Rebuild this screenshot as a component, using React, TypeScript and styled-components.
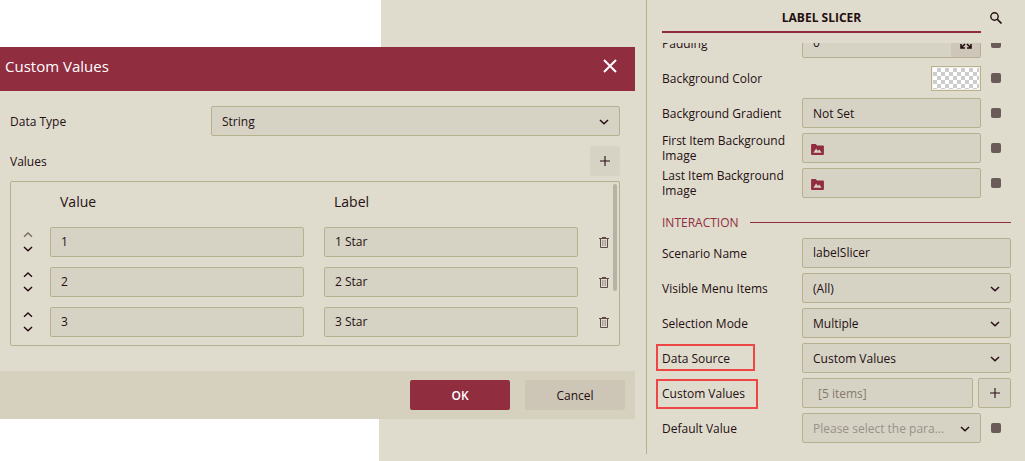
import React from "react";
import styled, { createGlobalStyle, css } from "styled-components";

const GlobalStyle = createGlobalStyle`
  *, *::before, *::after { box-sizing: border-box; }
  body {
    margin: 0;
    background: #e0dccd;
    color: #240f13;
    font: 12px/15px "Open Sans", "Noto Sans", sans-serif;
  }
  button, input, select { font: inherit; color: inherit; margin: 0; }
  button { border: 0; padding: 0; cursor: pointer; }
`;

const Page = styled.div`
  display: flex;
  min-height: 100vh;
`;

const Stage = styled.main`
  flex: 1;
  min-width: 0;
  display: flex;
  flex-direction: column;
`;

const Sheet = styled.div<{ $edge: number; $grow?: boolean }>`
  background: #fff;
  margin-right: ${(p) => p.$edge}px;
  ${(p) => (p.$grow ? "flex: 1;" : "height: 47px;")}
`;

const Dialog = styled.section`
  margin-right: 11px;
`;

const DialogHeader = styled.header`
  display: flex;
  justify-content: space-between;
  align-items: center;
  height: 44px;
  padding: 0 16px 6px 5px;
  background: #902d3f;
  color: #fff;
`;

const DialogTitle = styled.h1`
  margin: 0;
  font-size: 15px;
  font-weight: 400;
  line-height: 20px;
`;

const CloseButton = styled.button`
  display: grid;
  place-items: center;
  width: 18px;
  height: 18px;
  background: none;
  color: #fff;
`;

const DialogBody = styled.div`
  display: flex;
  flex-direction: column;
  padding: 15px 15px 25px 10px;
`;

const FormRow = styled.div`
  display: flex;
  align-items: center;
  justify-content: space-between;
  height: 30px;
  margin-bottom: 10px;
`;

const FormLabel = styled.label`
  width: 201px;
`;

const ListTitle = styled.h2`
  margin: 0;
  font: inherit;
`;

const AddButton = styled.button`
  display: grid;
  place-items: center;
  width: 30px;
  height: 30px;
  background: #d7d3c4;
  border-radius: 2px;
`;

const field = css`
  width: 100%;
  min-width: 0;
  height: 30px;
  padding: 0 10px;
  background: #d7d3c4;
  border: 1px solid #b7b08e;
  border-radius: 2px;
  outline: none;
`;

const Input = styled.input`
  ${field}
  padding-bottom: 2px;
`;

const SelectBox = styled.div`
  position: relative;
  flex: 1;
  min-width: 0;
  svg {
    position: absolute;
    right: 11px;
    top: 11px;
    pointer-events: none;
  }
`;

const NativeSelect = styled.select<{ $muted?: boolean }>`
  ${field}
  appearance: none;
  padding-right: 30px;
  text-overflow: ellipsis;
  color: ${(p) => (p.$muted ? "#98918a" : "inherit")};
`;

const ListFrame = styled.div`
  position: relative;
  margin-top: -5px;
  padding-bottom: 3px;
  border: 1px solid #b7b08e;
  border-radius: 2px;
`;

const ScrollThumb = styled.div`
  position: absolute;
  top: 2px;
  right: 2px;
  width: 4px;
  height: 107px;
  border-radius: 2px;
  background: #b7b2a6;
`;

const ValueTable = styled.table`
  width: 100%;
  table-layout: fixed;
  border-collapse: collapse;
  th {
    height: 40px;
    padding: 0 0 2px 10px;
    font-size: 14px;
    font-weight: 400;
    text-align: left;
  }
  td { height: 40px; padding: 5px 20px 5px 0; }
  td:first-child, td:last-child { padding: 0; }
`;

const MoveCol = styled.col`
  width: 39px;
`;

const DeleteCol = styled.col`
  width: 21px;
`;

const MoveButtons = styled.div`
  display: flex;
  flex-direction: column;
  align-items: center;
  gap: 2px;
  padding-right: 5px;
`;

const IconButton = styled.button`
  display: grid;
  place-items: center;
  width: 12px;
  height: 12px;
  background: none;
  &:disabled { opacity: 0.55; color: inherit; }
`;

const DialogFooter = styled.footer`
  display: flex;
  justify-content: flex-end;
  align-items: center;
  gap: 15px;
  height: 48px;
  padding-right: 10px;
  background: #d5d1be;
`;

const ActionButton = styled.button<{ $primary?: boolean }>`
  width: 100px;
  height: 30px;
  border-radius: 2px;
  background: ${(p) => (p.$primary ? "#902d3f" : "#cdc6b6")};
  color: ${(p) => (p.$primary ? "#fff" : "#240f13")};
  font-weight: ${(p) => (p.$primary ? 600 : 400)};
`;

const Panel = styled.aside`
  flex: none;
  align-self: flex-start;
  width: 379px;
  padding: 0 14px 11px 15px;
  border-left: 1px solid #b7b08e;
`;

const PanelHeader = styled.header`
  display: flex;
  gap: 8px;
  margin-bottom: 10px;
`;

const PanelTab = styled.h2`
  flex: 1;
  height: 33px;
  margin: 0;
  padding-top: 3px;
  border-bottom: 2px solid #902d3f;
  font-size: 12px;
  font-weight: 700;
  line-height: 30px;
  text-align: center;
`;

const SearchButton = styled.button`
  display: grid;
  place-items: center;
  width: 14px;
  height: 33px;
  padding-top: 2px;
  margin-right: 8px;
  background: none;
`;

const PanelScroll = styled.div`
  overflow: hidden;
`;

const RowList = styled.div<{ $scrolled?: boolean }>`
  display: flex;
  flex-direction: column;
  gap: 5px;
  margin-top: ${(p) => (p.$scrolled ? "-15px" : "0")};
`;

const PropertyRow = styled.div`
  display: grid;
  grid-template-columns: 140px minmax(0, 1fr);
  align-items: center;
  height: 30px;
`;

const PropertyLabel = styled.label<{ $box?: [number, number] }>`
  position: relative;
  padding-right: 10px;
  ${(p) =>
    p.$box &&
    css`
      &::after {
        content: "";
        position: absolute;
        top: -7px;
        left: -6px;
        width: ${p.$box[0]}px;
        height: ${p.$box[1]}px;
        border: 2px solid #ee4645;
      }
    `}
`;

const PropertyValue = styled.div<{ $gap: number }>`
  display: flex;
  align-items: center;
  gap: ${(p) => p.$gap}px;
`;

const Marker = styled.button`
  flex: none;
  width: 10px;
  height: 10px;
  margin-right: 10px;
  border-radius: 2px;
  background: #6b5b58;
`;

const ExpandField = styled.div`
  ${field}
  display: flex;
  padding: 0;
  input {
    flex: 1;
    min-width: 0;
    padding: 0 10px 2px;
    border: 0;
    background: none;
    outline: none;
  }
  button {
    display: grid;
    place-items: center;
    width: 29px;
    background: #cdc6b9;
  }
`;

const Swatch = styled.button`
  width: 50px;
  height: 25px;
  margin-left: auto;
  padding: 1px;
  border: 1px solid #b7b08e;
  background: repeating-conic-gradient(#ccc 0 25%, #fff 0 50%) 0 0 / 8px 8px content-box, #f4f2ea;
`;

const FieldButton = styled.button`
  ${field}
  text-align: left;
`;

const PickerButton = styled(FieldButton)`
  padding: 2px 8px 0;
  svg { display: block; }
`;

const ItemCount = styled(Input)`
  padding: 0 15px;
  color: #85796f;
`;

const SquareButton = styled.button`
  ${field}
  flex: none;
  display: grid;
  place-items: center;
  width: 33px;
  padding: 0;
`;

const SectionTitle = styled.h3`
  display: flex;
  align-items: center;
  gap: 11px;
  height: 20px;
  margin: 14px 0 6px;
  color: #902d3f;
  font-size: 12px;
  font-weight: 400;
  &::after {
    content: "";
    flex: 1;
    height: 1px;
    background: #902d3f;
  }
`;

const Stroke = ({ d, w = 10, h = 10, width = 2 }: { d: string; w?: number; h?: number; width?: number }) => (
  <svg width={w} height={h} viewBox={`0 0 ${w} ${h}`} fill="none" stroke="currentColor" strokeWidth={width} aria-hidden>
    <path d={d} />
  </svg>
);

const ChevronDown = () => <Stroke d="M1 3 L5 6.8 L9 3" width={1.5} />;
const ChevronUp = () => <Stroke d="M1 6.800 L5 3 L9 6.800" width={1.4} />;
const Plus = () => <Stroke d="M5 0 V10 M0 5 H10" width={1.1} />;

const TrashIcon = () => (
  <svg width="10" height="11" viewBox="0 0 10 11" fill="none" stroke="#5c4a48" aria-hidden>
    <path d="M0 1.5 H10 M3 .5 H7 M1.5 2 V10.5 H8.5 V2" />
    <path d="M3.500 3 V9 M5 3 V9 M6.500 3 V9" opacity=".4" />
  </svg>
);

const FolderImage = () => (
  <svg width="13" height="11" viewBox="0 0 14 12" aria-hidden>
    <path d="M1 0 H5 L6.500 1.500 H13 Q14 1.500 14 2.500 V11 Q14 12 13 12 H1 Q0 12 0 11 V1 Q0 0 1 0 Z" fill="#902d3f" />
    <path d="M2.500 9.500 L5.500 5 L7.500 7.500 L9 6 L11.500 9.500 Z" fill="#d7d3c4" />
  </svg>
);

const ExpandIcon = () => (
  <svg width="12" height="12" viewBox="0 0 12 12" fill="none" stroke="currentColor" strokeWidth="1.6" aria-hidden>
    <path d="M1 5 V1 H5 M1 1 L5 5 M7 1 H11 V5 M11 1 L7 5 M1 7 V11 H5 M1 11 L5 7 M7 11 H11 V7 M11 11 L7 7" />
  </svg>
);

const SearchIcon = () => (
  <svg width="12" height="12" viewBox="0 0 12 12" fill="none" stroke="currentColor" aria-hidden>
    <circle cx="4.500" cy="4.500" r="3.700" strokeWidth="1.400" />
    <path d="M7 7 L11.500 11.500" strokeWidth="1.700" />
  </svg>
);

function Select({ id, value, muted }: { id: string; value: string; muted?: boolean }) {
  return (
    <SelectBox>
      <NativeSelect id={id} $muted={muted} defaultValue={value}>
        <option>{value}</option>
      </NativeSelect>
      <ChevronDown />
    </SelectBox>
  );
}

interface PropertyProps {
  id: string;
  label: string;
  box?: [number, number];
  gap?: number;
  marker?: boolean;
  children: React.ReactNode;
}

function Property({ id, label, box, gap = 10, marker, children }: PropertyProps) {
  return (
    <PropertyRow>
      <PropertyLabel htmlFor={id} $box={box}>{label}</PropertyLabel>
      <PropertyValue $gap={gap}>
        {children}
        {marker && <Marker type="button" aria-label={`${label} options`} />}
      </PropertyValue>
    </PropertyRow>
  );
}

const items = [
  { value: "1", label: "1 Star" },
  { value: "2", label: "2 Star" },
  { value: "3", label: "3 Star" },
];

function CustomValuesDialog() {
  return (
    <Dialog role="dialog" aria-labelledby="dialog-title">
      <DialogHeader>
        <DialogTitle id="dialog-title">Custom Values</DialogTitle>
        <CloseButton type="button" aria-label="Close">
          <Stroke d="M1 1 L13 13 M13 1 L1 13" w={14} h={14} />
        </CloseButton>
      </DialogHeader>
      <DialogBody>
        <FormRow>
          <FormLabel htmlFor="data-type">Data Type</FormLabel>
          <Select id="data-type" value="String" />
        </FormRow>
        <FormRow>
          <ListTitle>Values</ListTitle>
          <AddButton type="button" aria-label="Add value"><Plus /></AddButton>
        </FormRow>
        <ListFrame>
          <ValueTable>
            <colgroup>
              <MoveCol />
              <col />
              <col />
              <DeleteCol />
            </colgroup>
            <thead>
              <tr>
                <td />
                <th scope="col">Value</th>
                <th scope="col">Label</th>
                <td />
              </tr>
            </thead>
            <tbody>
              {items.map((item, i) => (
                <tr key={item.value}>
                  <td>
                    <MoveButtons>
                      <IconButton type="button" aria-label="Move up" disabled={i === 0}><ChevronUp /></IconButton>
                      <IconButton type="button" aria-label="Move down"><ChevronDown /></IconButton>
                    </MoveButtons>
                  </td>
                  <td><Input aria-label={`Value ${i + 1}`} defaultValue={item.value} /></td>
                  <td><Input aria-label={`Label ${i + 1}`} defaultValue={item.label} /></td>
                  <td><IconButton type="button" aria-label="Delete"><TrashIcon /></IconButton></td>
                </tr>
              ))}
            </tbody>
          </ValueTable>
          <ScrollThumb />
        </ListFrame>
      </DialogBody>
      <DialogFooter>
        <ActionButton type="button" $primary>OK</ActionButton>
        <ActionButton type="button">Cancel</ActionButton>
      </DialogFooter>
    </Dialog>
  );
}

function PropertiesPanel() {
  return (
    <Panel>
      <PanelHeader>
        <PanelTab>LABEL SLICER</PanelTab>
        <SearchButton type="button" aria-label="Search"><SearchIcon /></SearchButton>
      </PanelHeader>
      <PanelScroll>
        <RowList $scrolled>
          <Property id="padding" label="Padding" marker>
            <ExpandField>
              <input id="padding" defaultValue="0" />
              <button type="button" aria-label="Expand padding"><ExpandIcon /></button>
            </ExpandField>
          </Property>
          <Property id="bg-color" label="Background Color" marker>
            <Swatch id="bg-color" type="button" />
          </Property>
          <Property id="bg-gradient" label="Background Gradient" marker>
            <FieldButton id="bg-gradient" type="button">Not Set</FieldButton>
          </Property>
          <Property id="first-image" label="First Item Background Image" marker>
            <PickerButton id="first-image" type="button"><FolderImage /></PickerButton>
          </Property>
          <Property id="last-image" label="Last Item Background Image" marker>
            <PickerButton id="last-image" type="button"><FolderImage /></PickerButton>
          </Property>
        </RowList>
      </PanelScroll>
      <SectionTitle>INTERACTION</SectionTitle>
      <RowList>
        <Property id="scenario" label="Scenario Name">
          <Input id="scenario" defaultValue="labelSlicer" />
        </Property>
        <Property id="menu-items" label="Visible Menu Items">
          <Select id="menu-items" value="(All)" />
        </Property>
        <Property id="selection" label="Selection Mode">
          <Select id="selection" value="Multiple" />
        </Property>
        <Property id="source" label="Data Source" box={[99, 27]}>
          <Select id="source" value="Custom Values" />
        </Property>
        <Property id="custom" label="Custom Values" box={[102, 30]} gap={5}>
          <ItemCount id="custom" defaultValue="[5 items]" readOnly />
          <SquareButton type="button" aria-label="Edit custom values"><Plus /></SquareButton>
        </Property>
        <Property id="default" label="Default Value" marker>
          <Select id="default" value="Please select the para..." muted />
        </Property>
      </RowList>
    </Panel>
  );
}

export default function App() {
  return (
    <Page>
      <GlobalStyle />
      <Stage>
        <Sheet $edge={265} />
        <CustomValuesDialog />
        <Sheet $edge={267} $grow />
      </Stage>
      <PropertiesPanel />
    </Page>
  );
}
